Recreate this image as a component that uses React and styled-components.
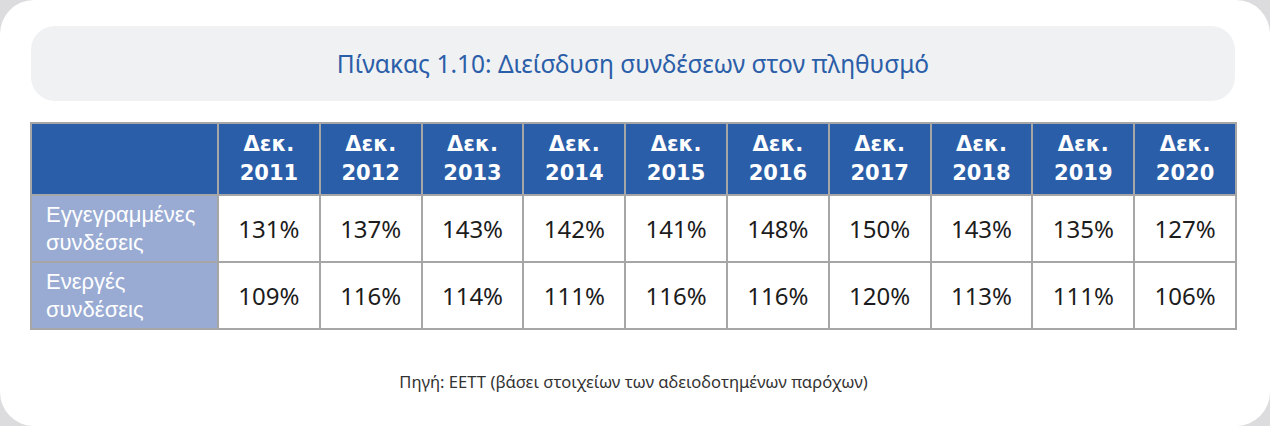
import React from "react";
import styled, { createGlobalStyle } from "styled-components";

const years = [2011, 2012, 2013, 2014, 2015, 2016, 2017, 2018, 2019, 2020];

const rows = [
  {
    label: ["Εγγεγραμμένες", "συνδέσεις"],
    values: [131, 137, 143, 142, 141, 148, 150, 143, 135, 127],
  },
  {
    label: ["Ενεργές", "συνδέσεις"],
    values: [109, 116, 114, 111, 116, 116, 120, 113, 111, 106],
  },
];

function App() {
  return (
    <>
      <GlobalStyle />
      <Card>
        <TitleBox>
          <Title>Πίνακας 1.10: Διείσδυση συνδέσεων στον πληθυσμό</Title>
        </TitleBox>
        <Table>
          <colgroup>
            <col style={{ width: "187px" }} />
            {years.map((y) => (
              <col key={y} />
            ))}
          </colgroup>
          <thead>
            <tr>
              <HeadCell />
              {years.map((y) => (
                <HeadCell key={y}>
                  Δεκ.
                  <br />
                  {y}
                </HeadCell>
              ))}
            </tr>
          </thead>
          <tbody>
            {rows.map((row) => (
              <tr key={row.label[0]}>
                <LabelCell>
                  {row.label[0]}
                  <br />
                  {row.label[1]}
                </LabelCell>
                {row.values.map((v, i) => (
                  <ValueCell key={i}>{v}%</ValueCell>
                ))}
              </tr>
            ))}
          </tbody>
        </Table>
        <Source>Πηγή: ΕΕΤΤ (βάσει στοιχείων των αδειοδοτημένων παρόχων)</Source>
      </Card>
    </>
  );
}

export default App;

const GlobalStyle = createGlobalStyle`
  html, body {
    margin: 0;
    padding: 0;
    background: #dcdcde;
  }
  body {
    font-family: "Noto Sans", sans-serif;
  }
`;

const Card = styled.div`
  width: 1270px;
  height: 426px;
  box-sizing: border-box;
  background: #ffffff;
  border-radius: 34px;
  padding: 26px 33px 0 30px;
  display: flex;
  flex-direction: column;
`;

const TitleBox = styled.div`
  height: 75px;
  margin-left: 1px;
  margin-right: 2px;
  border-radius: 24px;
  background: #f0f1f3;
  display: flex;
  align-items: center;
  justify-content: center;
`;

const Title = styled.h1`
  margin: 0;
  font-family: "Noto Sans", sans-serif;
  font-size: 24.5px;
  font-weight: 400;
  color: #2b5ea8;
`;

const Table = styled.table`
  margin-top: 21px;
  width: 1207px;
  border-collapse: collapse;
  table-layout: fixed;
  border: 2px solid #a6a6a6;
`;

const HeadCell = styled.th`
  height: 70px;
  padding: 0;
  background: #2a5ea8;
  border: 2px solid #a6a6a6;
  color: #ffffff;
  font-family: "DejaVu Sans", sans-serif;
  font-weight: 700;
  font-size: 21px;
  line-height: 29px;
  text-align: center;
`;

const LabelCell = styled.td`
  height: 65px;
  padding: 0 0 0 14px;
  background: #99abd3;
  border: 2px solid #a6a6a6;
  color: #ffffff;
  font-family: "Liberation Sans", Arial, sans-serif;
  font-size: 22px;
  line-height: 28px;
  text-align: left;
  white-space: nowrap;
`;

const ValueCell = styled.td`
  padding: 0;
  background: #ffffff;
  border: 2px solid #a6a6a6;
  color: #1c1c1c;
  font-family: "Noto Sans", sans-serif;
  font-size: 24px;
  text-align: center;
`;

const Source = styled.p`
  margin: 40px 0 0;
  text-align: center;
  font-family: "Noto Sans", sans-serif;
  font-size: 16.6px;
  color: #333333;
`;
